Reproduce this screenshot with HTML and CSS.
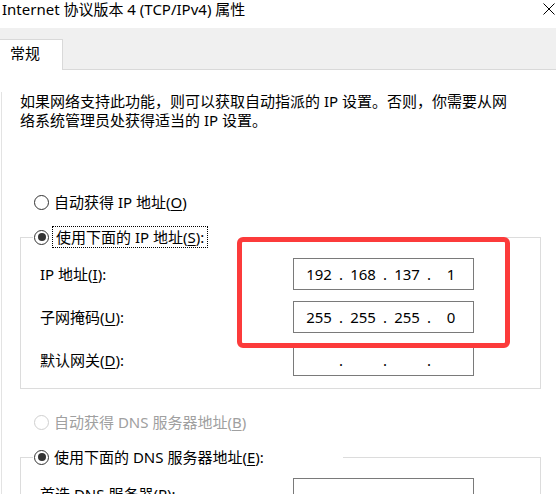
FILE: index.html
```html
<!DOCTYPE html>
<html lang="zh-CN">
<head>
  <meta charset="UTF-8" />
  <title>Internet 协议版本 4 (TCP/IPv4) 属性</title>
  <link rel="stylesheet" href="styles.css">
</head>
<body>
  <div class="window">
    <div class="titlebar">
      <span class="title">Internet 协议版本 4 (TCP/IPv4) 属性</span>
      <svg class="close" width="12" height="12" viewBox="0 0 12 12">
        <path d="M0.5 0.5 L11.5 11.5 M11.5 0.5 L0.5 11.5" stroke="#000" stroke-width="1" fill="none"/>
      </svg>
    </div>

    <!-- Tabs -->
    <div class="tabs">
      <div class="tab">常规</div>
    </div>

    <div class="panel">
      <p class="intro">如果网络支持此功能，则可以获取自动指派的 IP 设置。否则，你需要从网<br>络系统管理员处获得适当的 IP 设置。</p>

      <div class="radio-row">
        <span class="radio"></span>
        <span class="radio-label">自动获得 IP 地址(<u>O</u>)</span>
      </div>

      <div class="group">
        <div class="group-head head-ip">
          <span class="radio checked"></span>
          <span class="radio-label focused">使用下面的 IP 地址(<u>S</u>):</span>
        </div>
        <div class="fields">
          <label>IP 地址(<u>I</u>):</label>
          <div class="ip-box">
            <span class="octet">192</span><span class="dot">.</span><span class="octet">168</span><span class="dot">.</span><span class="octet">137</span><span class="dot">.</span><span class="octet">1</span>
          </div>
          <label>子网掩码(<u>U</u>):</label>
          <div class="ip-box">
            <span class="octet">255</span><span class="dot">.</span><span class="octet">255</span><span class="dot">.</span><span class="octet">255</span><span class="dot">.</span><span class="octet">0</span>
          </div>
          <label>默认网关(<u>D</u>):</label>
          <div class="ip-box">
            <span class="octet"></span><span class="dot">.</span><span class="octet"></span><span class="dot">.</span><span class="octet"></span><span class="dot">.</span><span class="octet"></span>
          </div>
        </div>
      </div>

      <div class="radio-row disabled">
        <span class="radio"></span>
        <span class="radio-label">自动获得 DNS 服务器地址(<u>B</u>)</span>
      </div>

      <div class="group">
        <div class="group-head head-dns">
          <span class="radio checked"></span>
          <span class="radio-label">使用下面的 DNS 服务器地址(<u>E</u>):</span>
        </div>
        <div class="fields">
          <label>首选 DNS 服务器(<u>P</u>):</label>
          <div class="ip-box">
            <span class="octet"></span><span class="dot">.</span><span class="octet"></span><span class="dot">.</span><span class="octet"></span><span class="dot">.</span><span class="octet"></span>
          </div>
          <label>备用 DNS 服务器(<u>A</u>):</label>
          <div class="ip-box">
            <span class="octet"></span><span class="dot">.</span><span class="octet"></span><span class="dot">.</span><span class="octet"></span><span class="dot">.</span><span class="octet"></span>
          </div>
        </div>
      </div>
    </div>

    <!-- annotation over the address fields -->
    <div class="highlight"></div>
  </div>
</body>
</html>
```

FILE: styles.css
```css
body {
  margin: 0;
  height: 494px;
  overflow: hidden;
  background: #fff;
  color: #000;
  font-family: 'Segoe UI', 'Noto Sans', 'Noto Sans CJK SC', sans-serif;
  font-size: 15px;
}
u { text-decoration-thickness: 1px; text-underline-offset: 2px; }
.window {
  position: relative;
  width: 556px;
}
.titlebar {
  height: 28px;
  display: flex;
  justify-content: space-between;
  align-items: flex-start;
  padding: 0 1px 0 2px;
}
.title { line-height: 18px; }
.close { margin-top: 3px; }
.tabs {
  height: 41px;
  background: #f0f0f0;
  border-bottom: 1px solid #d9d9d9;
  display: flex;
  align-items: flex-end;
}
.tab {
  box-sizing: border-box;
  width: 63px;
  height: 31px;
  margin-bottom: -1px;
  padding: 3px 0 0 10px;
  line-height: 20px;
  background: #fff;
  border-top: 1px solid #d9d9d9;
  border-right: 1px solid #d9d9d9;
}
.panel {
  margin-left: 1px;
  border-left: 1px solid #e3e3e3;
  padding-bottom: 40px;
}
.intro {
  margin: 22px 0 0;
  padding-left: 18px;
  line-height: 19px;
}
.radio-row {
  height: 24px;
  display: flex;
  align-items: center;
  padding-left: 32px;
}
.intro + .radio-row { margin-top: 60px; }
.radio-row.disabled { margin-top: 21px; color: #a0a0a0; }
.radio {
  box-sizing: border-box;
  width: 15px;
  height: 15px;
  border: 1px solid #333;
  border-radius: 50%;
  background: #fff;
  display: flex;
  align-items: center;
  justify-content: center;
  flex-shrink: 0;
}
.disabled .radio { border-color: #cfcfcf; }
.radio.checked::after {
  content: '';
  width: 8px;
  height: 8px;
  border-radius: 50%;
  background: #333;
}
.radio-label {
  margin-left: 3px;
  padding: 0 1px;
  line-height: 20px;
  border: 1px solid transparent;
}
.radio-label.focused {
  padding: 0 3px;
  border: 1px dotted #000;
}
.group {
  margin: 23px 0 0 18px;
  width: 521px;
  box-sizing: border-box;
  border: 1px solid #dcdcdc;
  padding-bottom: 12px;
}
.group-head {
  height: 24px;
  margin: -13px 0 0 12px;
  padding-left: 1px;
  background: #fff;
  display: flex;
  align-items: center;
}
.head-ip { width: 250px; }
.head-dns { width: 309px; }
.fields {
  margin-top: 9px;
  padding-left: 19px;
  display: grid;
  grid-template-columns: 253px 181px;
  row-gap: 11px;
  align-items: center;
}
.fields label { line-height: 20px; }
.ip-box {
  box-sizing: border-box;
  height: 32px;
  border: 1px solid #7a7a7a;
  padding-left: 12px;
  display: flex;
  align-items: center;
}
.octet {
  width: 26px;
  text-align: center;
}
.dot {
  width: 18px;
  text-align: center;
}
.highlight {
  position: absolute;
  left: 237px;
  top: 237px;
  width: 273px;
  height: 111px;
  box-sizing: border-box;
  border: 5px solid #fc3b3b;
  border-radius: 6px;
}
```
